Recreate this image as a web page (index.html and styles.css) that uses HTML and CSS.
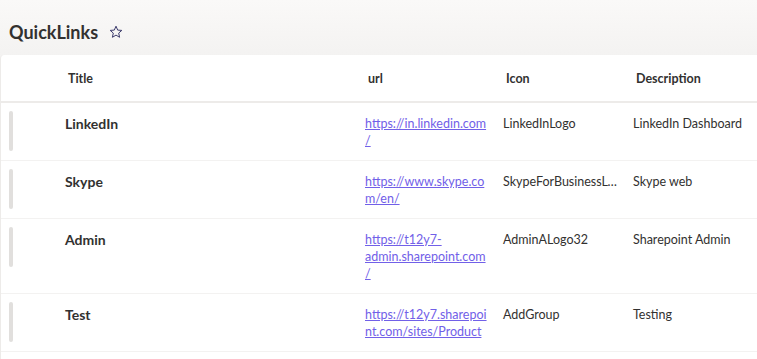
FILE: index.html
```html
<!DOCTYPE html>
<html lang="en">
<head>
    <meta charset="UTF-8">
    <title>QuickLinks</title>
    <link rel="stylesheet" href="styles.css">
</head>
<body>
    <div class="page-header">
        <h1>QuickLinks</h1>
        <svg class="star" width="14" height="14" viewBox="0 0 14 14">
            <path d="M7 1.2 L8.7 5.1 L12.8 5.4 L9.7 8.1 L10.6 12.3 L7 10.1 L3.4 12.3 L4.3 8.1 L1.2 5.4 L5.3 5.1 Z" fill="none" stroke="#3b3a6b" stroke-width="1" stroke-linejoin="round"/>
        </svg>
    </div>

    <div class="list-card">
        <table class="list">
            <colgroup>
                <col class="col-bar">
                <col class="col-title">
                <col class="col-url">
                <col class="col-icon">
                <col class="col-desc">
            </colgroup>
            <thead>
                <tr>
                    <th></th>
                    <th>Title</th>
                    <th>url</th>
                    <th>Icon</th>
                    <th>Description</th>
                </tr>
            </thead>
            <tbody>
                <tr>
                    <td><span class="row-bar"></span></td>
                    <td class="title">LinkedIn</td>
                    <td><a href="#">https://in.linkedin.com/</a></td>
                    <td class="icon-name">LinkedInLogo</td>
                    <td>LinkedIn Dashboard</td>
                </tr>
                <tr>
                    <td><span class="row-bar"></span></td>
                    <td class="title">Skype</td>
                    <td><a href="#">https://www.skype.com/en/</a></td>
                    <td class="icon-name">SkypeForBusinessLogo</td>
                    <td>Skype web</td>
                </tr>
                <tr>
                    <td><span class="row-bar"></span></td>
                    <td class="title">Admin</td>
                    <td><a href="#">https://t12y7-admin.sharepoint.com/</a></td>
                    <td class="icon-name">AdminALogo32</td>
                    <td>Sharepoint Admin</td>
                </tr>
                <tr>
                    <td><span class="row-bar"></span></td>
                    <td class="title">Test</td>
                    <td><a href="#">https://t12y7.sharepoint.com/sites/Product</a></td>
                    <td class="icon-name">AddGroup</td>
                    <td>Testing</td>
                </tr>
            </tbody>
        </table>
    </div>
</body>
</html>
```

FILE: styles.css
```css
body {
    margin: 0;
    font-family: 'Lato', 'Open Sans', sans-serif;
    font-size: 12.5px;
    color: #323130;
    background: linear-gradient(to bottom, #faf9f8, #f3f2f1 60px);
    overflow: hidden;
}

.page-header {
    display: flex;
    align-items: center;
    height: 55px;
    padding: 8px 0 0 9px;
    box-sizing: border-box;
}

.page-header h1 {
    margin: 0;
    font-size: 18px;
    font-weight: 700;
}

.star {
    margin-left: 11px;
}

.list-card {
    background: #fff;
    border-left: 1px solid #edebe9;
    border-radius: 4px 0 0 0;
    min-height: 320px;
}

.list {
    width: 100%;
    border-collapse: collapse;
    table-layout: fixed;
}

.col-bar { width: 56px; }
.col-title { width: 300px; }
.col-url { width: 138px; }
.col-icon { width: 130px; }

th {
    height: 46px;
    padding: 0 8px 0 11px;
    text-align: left;
    font-weight: 700;
    border-bottom: 2px solid #edebe9;
}

td {
    padding: 12px 8px 11px 8px;
    vertical-align: top;
    line-height: 17px;
    border-bottom: 1px solid #f3f2f1;
}

td:first-child {
    padding: 8px 0 0 8px;
}

.row-bar {
    display: block;
    width: 4px;
    height: 40px;
    border-radius: 2px;
    background: #e1dfdd;
}

.title {
    font-size: 14px;
    font-weight: 700;
    padding-top: 12px;
}

a {
    color: #7160e8;
    text-decoration: underline;
    overflow-wrap: anywhere;
}

.icon-name {
    padding-right: 4px;
    white-space: nowrap;
    overflow: hidden;
    text-overflow: ellipsis;
}
```
